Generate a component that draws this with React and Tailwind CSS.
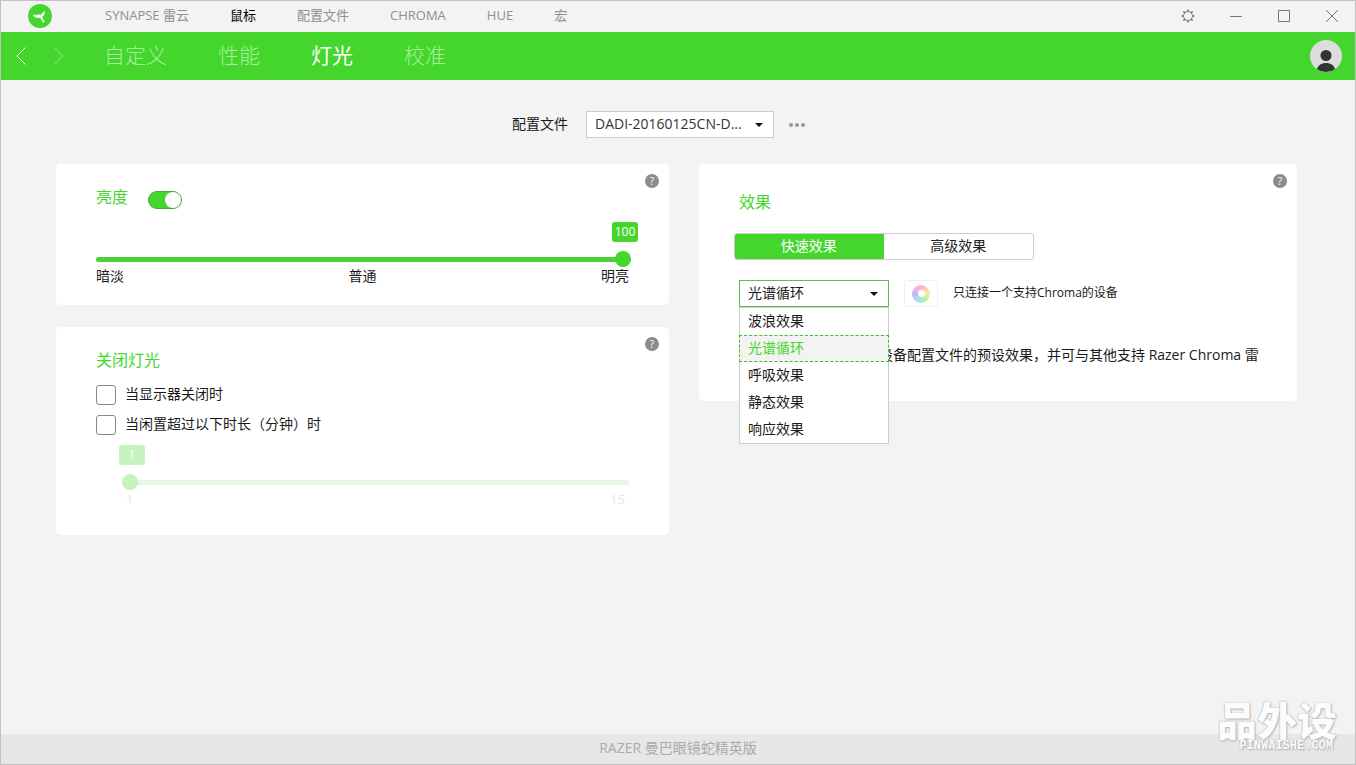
import { useState } from 'react';
import clsx from 'clsx';

const MODULES = ['SYNAPSE 雷云', '鼠标', '配置文件', 'CHROMA', 'HUE', '宏'];
const PAGES = ['自定义', '性能', '灯光', '校准'];
const EFFECTS = ['波浪效果', '光谱循环', '呼吸效果', '静态效果', '响应效果'];

function Logo() {
  return (
    <svg className="size-6" viewBox="0 0 24 24" aria-hidden="true">
      <circle cx="12" cy="12" r="12" fill="#44d62c" />
      <path
        d="M4.500 10.600c2.800.9 5-.9 8 .4 1-1.800 2.600-2.200 4-4.200.8 2.200.3 4.200-1.900 5.600-.4 1.700.6 3.400 2.400 4.800-.5 1.100-1.300 1.400-2.400 1.300-.4-1.900-1.300-3.500-2.500-4.600-2.800.6-6.400-.1-7.600-3.300z"
        fill="#f3f3f3"
      />
    </svg>
  );
}

function Caret() {
  return (
    <svg className="pointer-events-none absolute right-[11px] h-1 w-2" viewBox="0 0 8 4" aria-hidden="true">
      <path d="M0 0h8L4 4z" fill="#111" />
    </svg>
  );
}

function TitleBar({ active, onSelect }) {
  return (
    <header className="flex h-[31px] items-center pb-px">
      <a href="#home" aria-label="Razer Synapse" className="ml-[27px] mr-[53px]">
        <Logo />
      </a>
      <nav className="flex flex-1 gap-[41px] pb-0.5 text-[13px] leading-5">
        {MODULES.map((m) => (
          <a
            key={m}
            href="#module"
            onClick={() => onSelect(m)}
            className={m === active ? 'text-black' : 'text-[#8f8f8f]'}
          >
            {m}
          </a>
        ))}
      </nav>
      <div className="-mr-px flex text-[#777]">
        <button aria-label="设置" className="grid h-[30px] w-12 place-items-center">
          <svg className="size-4" viewBox="0 0 16 16" fill="none" stroke="currentColor">
            <circle cx="8" cy="8" r="4.500" />
            <path d="M8 1.500v2M8 12.500v2M1.500 8h2M12.500 8h2M3.400 3.400l1.400 1.400M11.200 11.200l1.400 1.400M12.600 3.400l-1.400 1.400M4.800 11.200l-1.400 1.400" strokeWidth="1.500" />
          </svg>
        </button>
        <button aria-label="最小化" className="grid h-[30px] w-12 place-items-center">
          <svg className="size-3" viewBox="0 0 12 12" stroke="currentColor">
            <path d="M0 6.500h12" />
          </svg>
        </button>
        <button aria-label="最大化" className="grid h-[30px] w-12 place-items-center">
          <svg className="size-3" viewBox="0 0 12 12" fill="none" stroke="currentColor">
            <path d="M.5.5h11v11H.5z" />
          </svg>
        </button>
        <button aria-label="关闭" className="grid h-[30px] w-12 place-items-center">
          <svg className="size-3" viewBox="0 0 12 12" stroke="currentColor">
            <path d="M0 0l12 12M12 0L0 12" />
          </svg>
        </button>
      </div>
    </header>
  );
}

function PageNav({ active, onSelect }) {
  return (
    <div className="flex h-12 items-center bg-[#44d62c] text-white">
      <div className="ml-2.5 mr-[35px] flex gap-[18px]">
        <button aria-label="后退" className="grid h-8 w-5 place-items-center">
          <svg className="h-[18px] w-2.5" viewBox="0 0 10 18" fill="none" stroke="currentColor">
            <path d="M9.500.5L1 9l8.500 8.500" />
          </svg>
        </button>
        <button aria-label="前进" className="grid h-8 w-5 place-items-center text-[#8fe781]">
          <svg className="h-[18px] w-2.5" viewBox="0 0 10 18" fill="none" stroke="currentColor">
            <path d="M.5.5L9 9 .5 17.500" />
          </svg>
        </button>
      </div>
      <nav className="flex flex-1 gap-[51px] pb-0.5 text-[21px] leading-8">
        {PAGES.map((p) => (
          <a
            key={p}
            href="#page"
            onClick={() => onSelect(p)}
            className={p === active ? 'text-white' : 'font-light text-[#a5f09a]'}
          >
            {p}
          </a>
        ))}
      </nav>
      <button aria-label="账户" className="mr-[13px]">
        <svg className="size-8" viewBox="0 0 32 32">
          <circle cx="16" cy="16" r="16" fill="#dcdcdc" />
          <circle cx="16" cy="15.500" r="5.500" fill="#333" />
          <path d="M7 29.200c1-4 4.500-6.200 9-6.200s8 2.200 9 6.200A16 16 0 0116 32a16 16 0 01-9-2.800z" fill="#333" />
        </svg>
      </button>
    </div>
  );
}

function Card({ children, className }) {
  return (
    <section className={clsx('relative rounded-[5px] bg-white px-10', className)}>
      <button
        aria-label="帮助"
        className="absolute right-2.5 top-2.5 grid size-3.5 place-items-center rounded-full bg-[#8c8c8c] text-[10px] leading-none text-white"
      >
        ?
      </button>
      {children}
    </section>
  );
}

function Slider({ label, value, min, max, onChange, disabled }) {
  const ratio = (value - min) / (max - min);
  return (
    <div className={clsx('relative pt-[29px]', disabled && 'opacity-30')}>
      <output
        className="absolute top-0 grid h-5 w-[26px] -translate-x-1/2 place-items-center rounded-[3px] bg-[#44d62c] text-xs text-white"
        style={{ left: `calc(10px + (100% - 16px) * ${ratio})` }}
      >
        {value}
      </output>
      <input
        type="range"
        aria-label={label}
        min={min}
        max={max}
        value={value}
        disabled={disabled}
        onChange={(e) => onChange(Number(e.target.value))}
        className={clsx(
          'block h-4 w-full appearance-none bg-transparent [&::-webkit-slider-runnable-track]:h-[5px] [&::-webkit-slider-runnable-track]:rounded-full [&::-webkit-slider-thumb]:-mt-1.5 [&::-webkit-slider-thumb]:size-4 [&::-webkit-slider-thumb]:appearance-none [&::-webkit-slider-thumb]:rounded-full [&::-webkit-slider-thumb]:bg-[#44d62c]',
          disabled
            ? '[&::-webkit-slider-runnable-track]:bg-[#aee6a6]'
            : '[&::-webkit-slider-runnable-track]:bg-[#4dd038]'
        )}
      />
    </div>
  );
}

function CheckRow({ children, checked, onChange }) {
  return (
    <label className="flex h-[30px] items-center gap-[9px]">
      <input
        type="checkbox"
        checked={checked}
        onChange={(e) => onChange(e.target.checked)}
        className="size-5 appearance-none rounded-[3px] border border-[#888] bg-white checked:border-[#44d62c] checked:bg-[#44d62c]"
      />
      <span className="pb-0.5">{children}</span>
    </label>
  );
}

function Brightness() {
  const [on, setOn] = useState(true);
  const [level, setLevel] = useState(100);
  return (
    <Card className="h-[141px] pt-[21px]">
      <div className="flex items-center gap-5">
        <h2 className="text-base leading-6 text-[#44d62c]">亮度</h2>
        <input
          type="checkbox"
          role="switch"
          aria-label="亮度"
          checked={on}
          onChange={(e) => setOn(e.target.checked)}
          className="mt-1.5 flex h-[18px] w-[34px] appearance-none items-center rounded-full border border-[#3fae2e] bg-[#ccc] before:size-4 before:rounded-full before:bg-white checked:justify-end checked:bg-[#44d62c]"
        />
      </div>
      <div className="-mr-0.5 mt-[13px]">
        <Slider label="亮度级别" value={level} min={0} max={100} onChange={setLevel} />
      </div>
      <div className="flex justify-between leading-[18px]">
        <span>暗淡</span>
        <span>普通</span>
        <span>明亮</span>
      </div>
    </Card>
  );
}

function LightsOff() {
  const [display, setDisplay] = useState(false);
  const [idle, setIdle] = useState(false);
  const [minutes, setMinutes] = useState(1);
  return (
    <Card className="h-[208px] pt-[21px]">
      <h2 className="mb-2 text-base leading-6 text-[#44d62c]">关闭灯光</h2>
      <div className="flex flex-col">
        <CheckRow checked={display} onChange={setDisplay}>当显示器关闭时</CheckRow>
        <CheckRow checked={idle} onChange={setIdle}>当闲置超过以下时长（分钟）时</CheckRow>
      </div>
      <div className="ml-[26px] mt-[5px]">
        <Slider label="闲置时长" value={minutes} min={1} max={15} onChange={setMinutes} disabled={!idle} />
        <div className="flex justify-between px-1 text-[13px] leading-[18px] text-[#e6e6e6]">
          <span>1</span>
          <span>15</span>
        </div>
      </div>
    </Card>
  );
}

function EffectPicker() {
  const [effect, setEffect] = useState('光谱循环');
  const [open, setOpen] = useState(true);
  const pick = (e) => {
    setEffect(e);
    setOpen(false);
  };
  return (
    <div className="relative flex w-[150px] items-center">
      <select
        aria-label="效果"
        value={effect}
        onChange={(e) => pick(e.target.value)}
        className="h-[27px] w-full appearance-none border border-[#5cc04a] bg-white px-2 pb-0.5 outline-none"
      >
        {EFFECTS.map((e) => (
          <option key={e}>{e}</option>
        ))}
      </select>
      <Caret />
      {open && (
        <ul role="listbox" aria-label="效果列表" className="absolute inset-x-0 top-full z-10 border border-[#ccc] bg-white">
          {EFFECTS.map((e) => (
            <li
              key={e}
              role="option"
              aria-selected={e === effect}
              onClick={() => pick(e)}
              className={clsx(
                '-mx-px flex h-[27px] cursor-pointer items-center border border-dashed px-2 pb-0.5',
                e === effect ? 'border-[#44b832] bg-[#f3f3f3] text-[#44d62c]' : 'border-transparent'
              )}
            >
              {e}
            </li>
          ))}
        </ul>
      )}
    </div>
  );
}

function Effects() {
  const [tab, setTab] = useState('快速效果');
  return (
    <Card className="h-[237px] pt-[26px]">
      <h2 className="text-base leading-6 text-[#44d62c]">效果</h2>
      <div className="-ml-[5px] mt-[19px] flex h-[27px] w-[300px] overflow-hidden rounded-[3px] border border-[#ccc]">
        {['快速效果', '高级效果'].map((name) => (
          <button
            key={name}
            onClick={() => setTab(name)}
            className={clsx('-my-px flex-1 pb-0.5', tab === name ? '-ml-px bg-[#44d62c] text-white' : 'text-[#222]')}
          >
            {name}
          </button>
        ))}
      </div>
      <div className="mt-5 flex items-center">
        <EffectPicker />
        <button
          aria-label="Chroma"
          className="ml-[15px] mr-[15px] grid h-[27px] w-[34px] place-items-center rounded-[3px] border border-[#f0f0f0]"
        >
          <span className="grid size-[18px] place-items-center rounded-full bg-[conic-gradient(#fbb6c0,#fbd3a8,#f3f0a0,#b9efa4,#a5edc9,#a9d9f3,#c0b4f2,#efb3ea,#fbb6c0)]">
            <span className="size-[7px] rounded-full bg-white" />
          </span>
        </button>
        <span className="pb-0.5 text-xs">只连接一个支持Chroma的设备</span>
      </div>
      <p className="-mr-3 mt-[37px] leading-[22px]">
        快速效果是可应用到此设备配置文件的预设效果，并可与其他支持 Razer Chroma 雷
      </p>
    </Card>
  );
}

function Watermark() {
  return (
    <div className="pointer-events-none absolute bottom-3 right-[18px] flex flex-col items-end text-[#fcfcfc]">
      <span className="text-[40px] font-black leading-[38px] [text-shadow:0_0_1px_#aaa,0_0_1px_#aaa,1px_1px_2px_#bbb]">品外设</span>
      <span className="pr-1 font-['Liberation_Mono',monospace] text-xs font-bold leading-3 [text-shadow:0_0_1px_#aaa,1px_1px_2px_#aaa]">
        PINWAISHE.COM
      </span>
    </div>
  );
}

export default function App() {
  const [module, setModule] = useState('鼠标');
  const [page, setPage] = useState('灯光');

  return (
    <div className="relative flex min-h-screen flex-col border border-[#c2c0c2] bg-[#f3f3f3] font-['Open_Sans','Noto_Sans_CJK_SC',sans-serif] text-sm text-[#1a1a1a]">
      <TitleBar active={module} onSelect={setModule} />
      <PageNav active={page} onSelect={setPage} />

      <main className="flex-1 pl-[55px] pr-[58px] pt-[31px]">
        <div className="flex items-center justify-center pr-9">
          <label htmlFor="profile" className="mr-[18px] pb-0.5">配置文件</label>
          <div className="relative flex w-[188px] items-center">
            <select
              id="profile"
              className="h-[27px] w-full appearance-none border border-[#ccc] bg-white px-2 pb-0.5 text-[#333] outline-none"
            >
              <option>DADI-20160125CN-D...</option>
            </select>
            <Caret />
          </div>
          <button aria-label="更多" className="ml-[15px] flex h-6 items-center gap-0.5">
            <span className="size-1 rounded-full bg-[#999]" />
            <span className="size-1 rounded-full bg-[#999]" />
            <span className="size-1 rounded-full bg-[#999]" />
          </button>
        </div>

        <div className="mt-[26px] grid grid-cols-[613fr_598fr] items-start gap-[30px]">
          <div className="flex flex-col gap-[22px]">
            <Brightness />
            <LightsOff />
          </div>
          <Effects />
        </div>
      </main>

      <footer className="flex h-[30px] items-center justify-center pb-0.5 text-sm text-[#aaa] bg-[#e7e7e7]">
        RAZER 曼巴眼镜蛇精英版
      </footer>
      <Watermark />
    </div>
  );
}
